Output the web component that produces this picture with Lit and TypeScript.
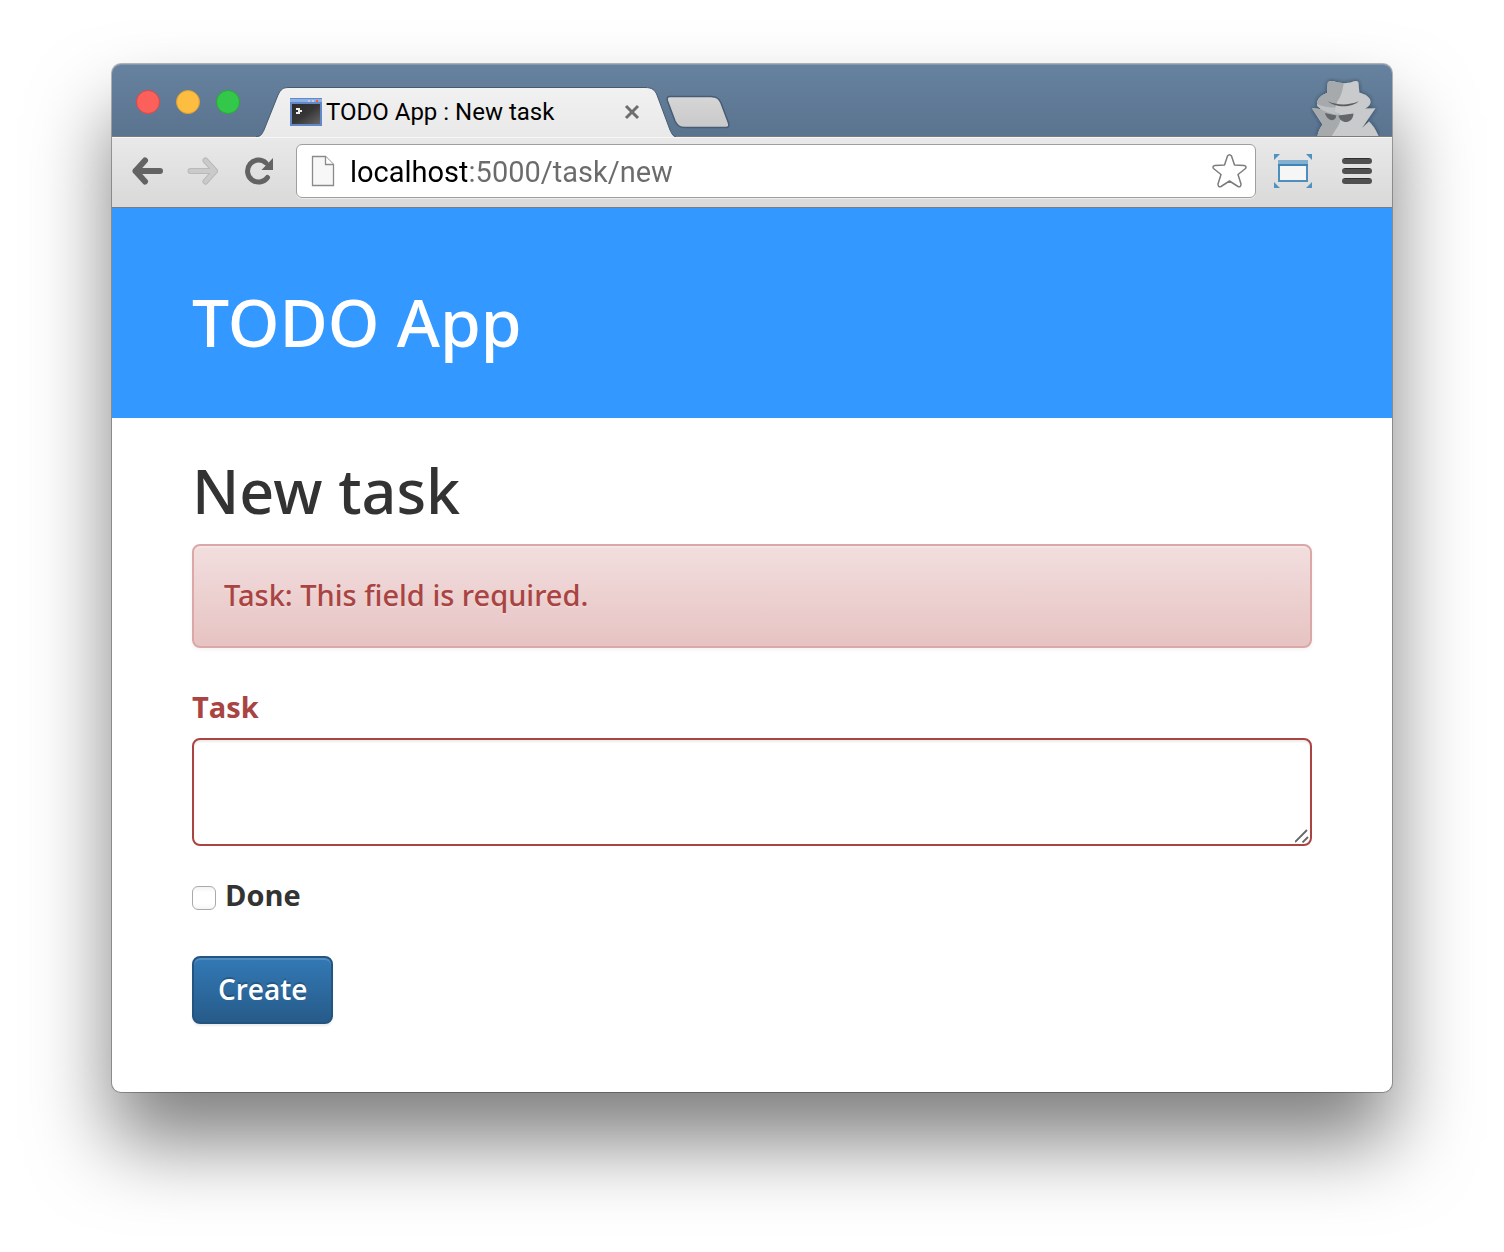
import { LitElement, html, css } from "lit";
import { customElement } from "lit/decorators.js";

@customElement("browser-tabs")
class BrowserTabs extends LitElement {
  static styles = css`
    :host { display: block; }
    .bar {
      display: flex;
      align-items: flex-end;
      height: 72px;
      box-sizing: border-box;
      padding: 0 12px 0 24px;
      background: linear-gradient(#67829e, #5a7490);
      box-shadow: inset 0 1px 0 #8399b0;
      border-radius: 9px 9px 0 0;
    }
    button { border: 0; padding: 0; margin: 0; background: none; display: block; }
    svg { display: block; }
    .lights { display: flex; gap: 16px; margin: 0 16px 22px 0; }
    .light { width: 24px; height: 24px; border-radius: 50%; border: 1px solid; }
    .close { background: #fc605b; border-color: #df4744; }
    .min { background: #fdbd40; border-color: #de9f34; }
    .max { background: #34c84a; border-color: #27aa35; }
    .tab {
      display: grid;
      width: 420px;
      height: 50px;
      margin-bottom: -1px;
      z-index: 1;
    }
    .shape, .content { grid-area: 1 / 1; }
    .content {
      display: flex;
      align-items: center;
      padding: 0 36px 0 34px;
      font: 24px/28px Roboto, "Noto Sans", sans-serif;
      color: #000;
    }
    .title { flex: 1; margin-left: 4px; white-space: nowrap; }
    .new { margin: 0 auto 7px -11px; }
  `;

  render() {
    return html`
      <div class="bar">
        <div class="lights">
          <button class="light close" aria-label="Close window"></button>
          <button class="light min" aria-label="Minimize window"></button>
          <button class="light max" aria-label="Zoom window"></button>
        </div>
        <div class="tab">
          <svg class="shape" width="420" height="50" viewBox="0 -1 420 50" aria-hidden="true">
            <defs>
              <linearGradient id="t" x1="0" y1="0" x2="0" y2="1">
                <stop offset="0" stop-color="#f1f1f1" /><stop offset="1" stop-color="#e9e9e9" />
              </linearGradient>
            </defs>
            <path d="M0 49C5 49 6 46 8 42L22 7C25 1 27 -.5 33 -.5H389C396 -.5 399 2 401 7L414 42C416 46 417 49 420 49Z" fill="url(#t)" />
            <path d="M0 48.500C5 48.500 6 46 8 42L22 7C25 1 27 -.5 33 -.5H389C396 -.5 399 2 401 7L414 42C416 46 417 48.500 420 48.500" fill="none" stroke="#465a70" />
          </svg>
          <div class="content">
            <svg width="32" height="28" viewBox="0 0 32 28" aria-hidden="true">
              <defs>
                <linearGradient id="k" x1="0" y1="0" x2="1" y2="1">
                  <stop offset="0" stop-color="#2b2b2b" /><stop offset=".5" stop-color="#363636" /><stop offset="1" stop-color="#666" />
                </linearGradient>
              </defs>
              <path d="M0 0H32V28H0Z" fill="#6288c8" />
              <path d="M0 1H32V4H0Z" fill="#8db2e6" />
              <path d="M2 6H30V26H2Z" fill="url(#k)" />
              <path d="M18 2h2v2h-2zM22 2h2v2h-2z" fill="#c3cede" />
              <path d="M26 2h2v2h-2z" fill="#ff5d2e" />
              <path d="M6 10h4v2h2v2h-2v2H6v-2h2v-2H6z" fill="#eee" />
            </svg>
            <span class="title">TODO App : New task</span>
            <button aria-label="Close tab">
              <svg width="16" height="16" viewBox="0 0 16 16"><path d="M2 2L14 14M14 2L2 14" stroke="#6e6e6e" stroke-width="3" /></svg>
            </button>
          </div>
        </div>
        <button class="new" aria-label="New tab">
          <svg width="66" height="34" viewBox="0 0 66 34">
            <defs>
              <linearGradient id="n" x1="0" y1="0" x2="0" y2="1">
                <stop offset="0" stop-color="#d6d6d6" /><stop offset="1" stop-color="#c9c9c9" />
              </linearGradient>
            </defs>
            <path d="M5 1.500H46C52 1.500 54 4 56 8L63.500 28C64.500 31 63.500 32.500 61 32.500H20C14 32.500 12 30 10 26L2.500 6C1.500 3 2.500 1.500 5 1.500Z" fill="url(#n)" stroke="#465c75" stroke-width="1.500" />
          </svg>
        </button>
        <svg width="70" height="58" viewBox="0 0 70 58" role="img" aria-label="Incognito">
          <defs>
            <filter id="s" x="-20%" y="-20%" width="140%" height="140%"><feDropShadow dx="0" dy="0" stdDeviation="2" flood-color="#1c2c3e" flood-opacity=".7" /></filter>
            <clipPath id="c"><path d="M0 0H34.500C33 12 31 19 27 24L24 34L30 36C33 44 26 50 22 58H0Z" /></clipPath>
            <path id="coat" d="M2 30.300L10 31L58 30.500L65.500 30.300L52 50L59 43.500C63 47 66 52 68.500 58H7.500C8 54 10 50 12.500 46.500Z" />
            <path id="hat" d="M17.700 5C19 2 23 3 26 4C31 5.500 38 5.500 42 4C45 2.500 48 2.500 48.500 5L49.300 14.500C55 16 60 19 60.500 23C61 27 58 28.500 55 31C48 36 40 37.500 31 37C22 36.500 12 33 7.500 28C5.500 22 11 17 17 15Z" />
          </defs>
          <g filter="url(#s)" fill="#c8cacc">
            <use href="#coat" />
            <use href="#hat" />
          </g>
          <g clip-path="url(#c)">
            <g fill="#a6aaac">
              <use href="#coat" />
              <use href="#hat" />
            </g>
            <path d="M7 26C14 29 20 30 30 29V37C20 36 12 33 7.500 28Z" fill="#bfc2c4" />
          </g>
          <path d="M18 23.300C27 27.500 39 27.500 48.700 23.300C42 30 25 30 18 23.300Z" fill="#5b5f61" />
          <path d="M15 35L26.300 37.500C26 44.500 17 43.500 15 35ZM28.500 37.500L43.500 35.500C43 46.500 30 46.500 28.500 37.500Z" fill="#63676a" />
        </svg>
      </div>
    `;
  }
}

@customElement("browser-toolbar")
class BrowserToolbar extends LitElement {
  static styles = css`
    :host { display: block; }
    .bar {
      display: flex;
      align-items: center;
      padding: 7px 20px 9px;
      border-top: 1px solid #7c7c7c;
      border-bottom: 1px solid #777b80;
      background: linear-gradient(#e9e9e9, #d9d9d9);
      box-shadow: inset 0 1px 0 #f6f6f6;
    }
    button { border: 0; padding: 0; margin: 0; background: none; display: block; }
    svg { display: block; }
    .nav { display: flex; gap: 23px; margin-right: 23px; }
    .address {
      flex: 1;
      display: flex;
      align-items: center;
      min-width: 0;
      height: 54px;
      box-sizing: border-box;
      padding: 0 8px 0 14px;
      border: 1px solid #9e9e9e;
      border-radius: 6px;
      background: #fff;
      box-shadow: 0 1px 0 #eee;
    }
    .url {
      flex: 1;
      min-width: 0;
      margin: 0 12px 0 15px;
      padding: 2px 0 0;
      border: 0;
      outline: 0;
      font: 29px/36px Roboto, "Noto Sans", sans-serif;
      background: linear-gradient(90deg, #000 117px, #6b6b6b 117px);
      background-clip: text;
      -webkit-background-clip: text;
      -webkit-text-fill-color: transparent;
    }
    .tools { display: flex; align-items: center; gap: 30px; margin-left: 18px; }
  `;

  render() {
    return html`
      <div class="bar">
        <div class="nav">
          <button aria-label="Back">
            <svg width="32" height="28" viewBox="0 0 32 28"><path d="M13 3.500L3.500 14L13 24.500M3.500 14H28" fill="none" stroke="#636363" stroke-width="6" stroke-linecap="round" stroke-linejoin="round" /></svg>
          </button>
          <button aria-label="Forward" disabled>
            <svg width="32" height="28" viewBox="0 0 32 28"><path d="M18.500 3.500L28 14L18.500 24.500M28 14H3.500" fill="none" stroke="#b9b9b9" stroke-width="6" stroke-linecap="round" stroke-linejoin="round" /><path d="M18.500 3.500L28 14L18.500 24.500M28 14H3.500" fill="none" stroke="#cacaca" stroke-width="4" stroke-linecap="round" stroke-linejoin="round" /></svg>
          </button>
          <button aria-label="Reload">
            <svg width="31" height="28" viewBox="0 0 31 28"><path d="M25.500 20.500A11 11 0 1 1 24 6" fill="none" stroke="#636363" stroke-width="5" stroke-linecap="round" /><path d="M31 1V13H19.500Z" fill="#636363" /></svg>
          </button>
        </div>
        <div class="address">
          <svg width="24" height="32" viewBox="0 0 24 32" aria-hidden="true">
            <path d="M1.500 1.500H14.500L22.500 9.500V30.500H1.500Z" fill="#f7f7f7" stroke="#8a8a8a" stroke-width="1.300" />
            <path d="M14.500 1.500V9.500H22.500" fill="#fff" stroke="#8a8a8a" stroke-width="1.300" />
          </svg>
          <input class="url" type="text" aria-label="Address" value="localhost:5000/task/new" spellcheck="false" />
          <button aria-label="Bookmark this page">
            <svg width="36" height="36" viewBox="0 0 36 36"><path d="M16.500 3Q18.500 .5 20.500 3L23.500 12L33 12.500Q36 13 34.500 15.500L27 21.500L30 31Q30 34.500 27 33.500L18.500 28L10 33.500Q7 34.500 7 31L10 21.500L2.500 15.500Q1 13 4 12.500L13.500 12Z" fill="#fff" stroke="#7c7c7c" stroke-width="1.500" stroke-linejoin="round" /></svg>
          </button>
        </div>
        <div class="tools">
          <button aria-label="Resize window">
            <svg width="38" height="34" viewBox="0 0 38 34">
              <path d="M0 0H6L0 6ZM38 0H32L38 6ZM0 34H6L0 28ZM38 34H32L38 28Z" fill="#4f92bd" />
              <path d="M5 11H33V27H5Z" fill="#f6f6f6" stroke="#4c8fbd" stroke-width="2" />
              <path d="M4 6H34V11H4Z" fill="#84b0d0" />
              <path d="M4 10H34V12H4Z" fill="#3f84b4" />
            </svg>
          </button>
          <button aria-label="Menu">
            <svg width="30" height="26" viewBox="0 0 30 26"><path d="M3 3H27M3 13H27M3 23H27" stroke="#505050" stroke-width="6" stroke-linecap="round" /><path d="M3 .5H27M3 10.500H27M3 20.500H27" stroke="#303030" stroke-width="1" stroke-linecap="round" /></svg>
          </button>
        </div>
      </div>
    `;
  }
}

@customElement("task-page")
class TaskPage extends LitElement {
  static styles = css`
    :host { display: block; font: 500 29px/38px "Noto Sans", "Open Sans", sans-serif; color: #333; }
    .header { padding: 76px 80px 60px; background: #3398ff; }
    h1, h2 { margin: 0; font-weight: 500; }
    h1 { font-size: 66px; line-height: 74px; color: #fff; }
    h2 { font-size: 61px; line-height: 68px; margin-bottom: 19px; }
    main { padding: 39px 80px 68px; }
    .alert {
      padding: 30px 30px 32px;
      border: 2px solid #dca7a7;
      border-radius: 8px;
      background: linear-gradient(#f2dede, #e7c3c3);
      box-shadow: inset 0 2px 0 rgba(255, 255, 255, 0.25), 0 2px 4px rgba(0, 0, 0, 0.05);
      color: #a94442;
      text-shadow: 0 2px 0 rgba(255, 255, 255, 0.2);
      margin-bottom: 40px;
    }
    label { font-family: "Open Sans", "Noto Sans", sans-serif; font-weight: 700; }
    .label { display: block; margin-bottom: 12px; color: #a94442; }
    .field { position: relative; margin-bottom: 30px; }
    textarea {
      display: block;
      width: 100%;
      height: 108px;
      box-sizing: border-box;
      padding: 12px 24px;
      border: 2px solid #a94442;
      border-radius: 8px;
      outline: 0;
      resize: none;
      font: inherit;
      color: #555;
      background: #fff;
      box-shadow: inset 0 2px 2px rgba(0, 0, 0, 0.075);
    }
    .grip { position: absolute; right: 3px; bottom: 3px; pointer-events: none; }
    .check { display: flex; align-items: center; gap: 9px; margin-bottom: 42px; }
    .check input {
      appearance: none;
      width: 24px;
      height: 24px;
      margin: 6px 0 0;
      border: 1px solid #aaa;
      border-radius: 6px;
      background: linear-gradient(#f3f3f3, #fff 25%, #fff 75%, #f6f6f6);
    }
    .create {
      display: block;
      padding: 12px 24px 14px;
      border: 2px solid #245580;
      border-radius: 8px;
      background: linear-gradient(#337ab7, #265a88) border-box;
      box-shadow: inset 0 2px 0 rgba(255, 255, 255, 0.15), 0 2px 2px rgba(0, 0, 0, 0.075);
      color: #fff;
      font: 600 28px/38px "Open Sans", "Noto Sans", sans-serif;
      text-shadow: 0 -2px 0 rgba(0, 0, 0, 0.2);
    }
  `;

  render() {
    return html`
      <header class="header"><h1>TODO App</h1></header>
      <main>
        <h2>New task</h2>
        <div class="alert" role="alert">Task: This field is required.</div>
        <form @submit=${(e: Event) => e.preventDefault()}>
          <label class="label" for="task">Task</label>
          <div class="field">
            <textarea id="task" name="task"></textarea>
            <svg class="grip" width="14" height="14" viewBox="0 0 14 14" aria-hidden="true"><path d="M0 13L12 1M7.500 13.500L13 8" stroke="#666" stroke-width="1.800" /></svg>
          </div>
          <div class="check">
            <input id="done" name="done" type="checkbox" />
            <label for="done">Done</label>
          </div>
          <button class="create" type="submit">Create</button>
        </form>
      </main>
    `;
  }
}

@customElement("app-root")
class AppRoot extends LitElement {
  static styles = css`
    :host {
      display: flex;
      min-height: 100vh;
      box-sizing: border-box;
      padding: 64px 112px 160px;
      background: #fff;
      overflow: hidden;
    }
    .window {
      flex: 1;
      min-width: 0;
      border-radius: 9px;
      background: #fff;
      box-shadow: 0 0 0 1px rgba(0, 0, 0, 0.28), 0 50px 80px rgba(0, 0, 0, 0.5);
    }
  `;

  render() {
    return html`
      <div class="window">
        <browser-tabs></browser-tabs>
        <browser-toolbar></browser-toolbar>
        <task-page></task-page>
      </div>
    `;
  }
}
